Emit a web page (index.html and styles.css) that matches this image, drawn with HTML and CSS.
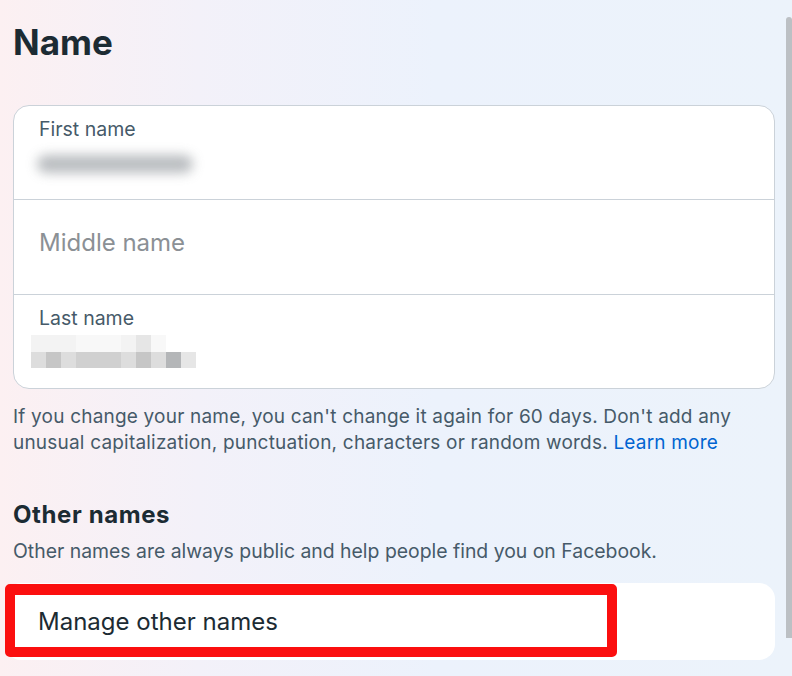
FILE: index.html
```html
<!DOCTYPE html>
<html>
<head>
<meta charset="utf-8">
<link rel="stylesheet" href="styles.css">
</head>
<body>
<div class="page">
  <main class="content">
    <h1 class="title">Name</h1>
    <div class="card">
      <div class="field field-first">
        <div class="label">First name</div>
        <div class="blur-value"></div>
      </div>
      <div class="field field-empty">
        <div class="placeholder">Middle name</div>
      </div>
      <div class="field">
        <div class="label">Last name</div>
        <div class="pixel-value">
          <div class="px-row px-top">
            <span class="px q0"></span><span class="px q0"></span><span class="px q0"></span><span class="px q1"></span><span class="px q1"></span><span class="px q1"></span><span class="px q0"></span><span class="px q2"></span><span class="px q1"></span>
          </div>
          <div class="px-row">
            <span class="px p1"></span><span class="px p3"></span><span class="px p1"></span><span class="px p2"></span><span class="px p2"></span><span class="px p2"></span><span class="px p1"></span><span class="px p3"></span><span class="px p1"></span><span class="px p4"></span><span class="px p0"></span>
          </div>
        </div>
      </div>
    </div>
    <p class="help">If you change your name, you can't change it again for 60 days. Don't add any unusual capitalization, punctuation, characters or random words. <a class="link">Learn more</a></p>
    <h2 class="subtitle">Other names</h2>
    <p class="desc">Other names are always public and help people find you on Facebook.</p>
    <div class="manage-wrap">
      <div class="manage">Manage other names</div>
      <div class="highlight"></div>
    </div>
  </main>
  <div class="scrollbar"><div class="thumb"></div></div>
</div>
</body>
</html>
```
FILE: styles.css
```css
html, body {
  margin: 0;
  padding: 0;
}
body {
  width: 792px;
  height: 676px;
  overflow: hidden;
  font-family: "Inter", "Open Sans", sans-serif;
  background: linear-gradient(90deg, #fcf0f2 0%, #f3f1f9 25%, #ecf2fc 55%, #ecf3fb 100%);
}
.page {
  display: flex;
  height: 676px;
}
.content {
  width: 762px;
  padding-left: 13px;
}
.title {
  margin: 22px 0 0;
  font-size: 35px;
  line-height: 40px;
  font-weight: 700;
  color: #1c2b33;
}
.card {
  margin-top: 43px;
  background: #fff;
  border: 1px solid #cbd2d9;
  border-radius: 16px;
  overflow: hidden;
}
.field {
  height: 94px;
  box-sizing: border-box;
  padding: 12px 25px 0;
  border-top: 1px solid #cbd2d9;
}
.field-first {
  height: 93px;
  border-top: none;
}
.field-empty {
  height: 95px;
  display: flex;
  align-items: center;
  padding-top: 0;
  padding-bottom: 9px;
}
.label {
  font-size: 19.5px;
  line-height: 22px;
  color: #465a69;
}
.placeholder {
  font-size: 24px;
  line-height: 30px;
  color: #8b9095;
}
.blur-value {
  margin-top: 15px;
  margin-left: -2px;
  width: 156px;
  height: 18px;
  border-radius: 9px;
  background: #a8acb0;
  filter: blur(6px);
  opacity: 0.8;
}
.pixel-value {
  margin-top: 6px;
  margin-left: -8px;
}
.px-row {
  display: flex;
}
.px {
  width: 15px;
  height: 16px;
}
.px-top .px { height: 17px; }
.q0 { background: #f3f3f3; }
.q1 { background: #f8f8f8; }
.q2 { background: #e6e6e6; }
.p0 { background: #e6e6e6; }
.p1 { background: #dddddd; }
.p2 { background: #d0d0d0; }
.p3 { background: #c6c6c6; }
.p4 { background: #b4b6b8; }
.help {
  margin: 15px 0 0;
  font-size: 19px;
  line-height: 26px;
  letter-spacing: 0.2px;
  color: #465a69;
}
.link {
  color: #0064d1;
}
.subtitle {
  margin: 45px 0 0;
  font-size: 24px;
  line-height: 28px;
  font-weight: 700;
  letter-spacing: 0.6px;
  color: #1c2b33;
}
.desc {
  margin: 10px 0 0;
  font-size: 19.4px;
  line-height: 24px;
  color: #465a69;
}
.manage-wrap {
  position: relative;
  margin-top: 20px;
  margin-left: -8px;
}
.manage {
  height: 77px;
  box-sizing: border-box;
  padding-left: 33px;
  display: flex;
  align-items: center;
  background: #fff;
  border-radius: 16px;
  font-size: 24px;
  color: #1c2b33;
}
.highlight {
  position: absolute;
  left: 0;
  top: 1px;
  width: 612px;
  height: 73px;
  box-sizing: border-box;
  border: 10px solid #fb0f0f;
  border-top-width: 11px;
  border-radius: 5px;
}
.scrollbar {
  margin-left: 11px;
  width: 6px;
  padding-top: 17px;
}
.thumb {
  height: 621px;
  background: #bcc0c4;
  border-radius: 3px 3px 0 0;
}
```
